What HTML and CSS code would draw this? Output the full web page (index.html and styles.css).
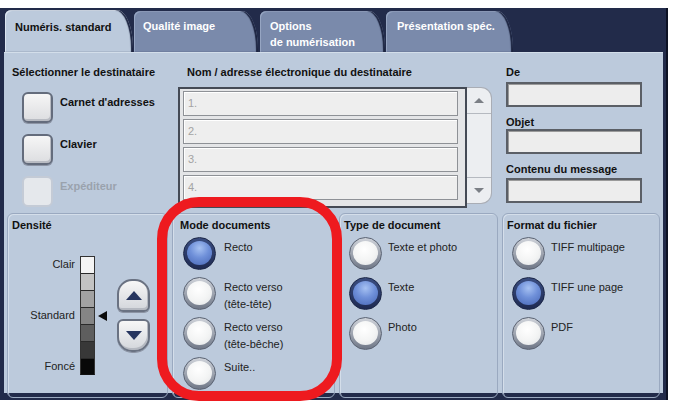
FILE: index.html
```html
<!DOCTYPE html>
<html lang="fr">
<head>
<meta charset="utf-8">
<title>Numéris. standard</title>
<link rel="stylesheet" href="styles.css">
</head>
<body>
<div class="screen">
  <div class="tabs">
    <div class="tab active">Numéris. standard</div>
    <div class="tab t2">Qualité image</div>
    <div class="tab t3">Options<br>de numérisation</div>
    <div class="tab t4">Présentation spéc.</div>
  </div>
  <div class="panel">
    <div class="top">
      <div class="col-left">
        <div class="label">Sélectionner le destinataire</div>
        <div class="btn-list">
          <div class="btn-row"><span class="sq-btn"></span><span class="btn-text">Carnet d'adresses</span></div>
          <div class="btn-row"><span class="sq-btn"></span><span class="btn-text">Clavier</span></div>
          <div class="btn-row disabled"><span class="sq-btn"></span><span class="btn-text">Expéditeur</span></div>
        </div>
      </div>
      <div class="col-mid">
        <div class="label mid-label">Nom / adresse électronique du destinataire</div>
        <div class="listwrap">
          <div class="listbox">
            <div class="lrow">1.</div>
            <div class="lrow">2.</div>
            <div class="lrow">3.</div>
            <div class="lrow">4.</div>
          </div>
          <div class="scroll">
            <div class="sc-up"><span class="tri-up"></span></div>
            <div class="sc-mid"></div>
            <div class="sc-down"><span class="tri-down"></span></div>
          </div>
        </div>
      </div>
      <div class="col-right">
        <div class="label r1">De</div>
        <div class="field"></div>
        <div class="label r2">Objet</div>
        <div class="field"></div>
        <div class="label r3">Contenu du message</div>
        <div class="field"></div>
      </div>
    </div>
    <div class="bottom">
      <div class="group density">
        <div class="gtitle">Densité</div>
        <div class="dens-body">
          <div class="scale-grid">
            <span class="dlabel l1">Clair</span>
            <span class="dlabel l4">Standard</span>
            <span class="dlabel l7">Foncé</span>
            <span class="seg s1"></span>
            <span class="seg s2"></span>
            <span class="seg s3"></span>
            <span class="seg s4"></span>
            <span class="seg s5"></span>
            <span class="seg s6"></span>
            <span class="seg s7"></span>
            <span class="pointer"></span>
          </div>
          <div class="updown">
            <div class="ud up"><span class="big-up"></span></div>
            <div class="ud down"><span class="big-down"></span></div>
          </div>
        </div>
      </div>
      <div class="group mode">
        <div class="gtitle">Mode documents</div>
        <div class="opts">
          <div class="opt"><span class="radio on"></span><span class="otext">Recto</span></div>
          <div class="opt"><span class="radio"></span><span class="otext">Recto verso<br>(tête-tête)</span></div>
          <div class="opt"><span class="radio"></span><span class="otext">Recto verso<br>(tête-bêche)</span></div>
          <div class="opt"><span class="radio"></span><span class="otext">Suite..</span></div>
        </div>
      </div>
      <div class="group type">
        <div class="gtitle">Type de document</div>
        <div class="opts">
          <div class="opt"><span class="radio"></span><span class="otext">Texte et photo</span></div>
          <div class="opt"><span class="radio on"></span><span class="otext">Texte</span></div>
          <div class="opt"><span class="radio"></span><span class="otext">Photo</span></div>
        </div>
      </div>
      <div class="group format">
        <div class="gtitle">Format du fichier</div>
        <div class="opts">
          <div class="opt"><span class="radio"></span><span class="otext">TIFF multipage</span></div>
          <div class="opt"><span class="radio on"></span><span class="otext">TIFF une page</span></div>
          <div class="opt"><span class="radio"></span><span class="otext">PDF</span></div>
        </div>
      </div>
    </div>
  </div>
</div>
<div class="highlight"></div>
</body>
</html>
```
FILE: styles.css
```css
html, body {
  margin: 0;
  padding: 0;
}
body {
  width: 673px;
  height: 404px;
  overflow: hidden;
  background: #ffffff;
  position: relative;
  font-family: "Liberation Sans", Arial, sans-serif;
  font-size: 11px;
  color: #1a1a1a;
}
.screen {
  margin-top: 8px;
  width: 668px;
  height: 392px;
  box-sizing: border-box;
  background: #222b4a;
  padding: 2px 3px 7px 4px;
  display: flex;
  flex-direction: column;
  border-right: 2px solid #0d1224;
}
.tabs {
  height: 42px;
  display: flex;
  align-items: flex-end;
  flex: none;
}
.tab {
  height: 41px;
  box-sizing: border-box;
  padding: 7px 0 0 10px;
  font-weight: bold;
  line-height: 16px;
  color: #ffffff;
  background: #7a8aab;
  border-radius: 6px 16px 0 0 / 6px 38px 0 0;
  box-shadow: inset -2px 0 1px #1c2440, inset 1px 1px 0 #96a5c2;
}
.tab.active {
  height: 42px;
  width: 128px;
  margin-left: 1px;
  color: #111111;
  background: #bccadc;
  padding-top: 9px;
  box-shadow: inset -2px 0 1px #1c2440, inset 1px 1px 0 #dbe4ef;
}
.t2 { width: 124px; margin-left: 1px; padding-left: 9px; }
.t3 { width: 125px; margin-left: 2px; padding-left: 10px; }
.t4 { width: 127px; margin-left: 1px; padding-left: 11px; }

.panel {
  flex: 1;
  background: #bccadc;
  display: flex;
  flex-direction: column;
  box-shadow: inset 0 1px 0 #d3deea;
}
.top {
  display: grid;
  grid-template-columns: 166px 314px 150px;
  column-gap: 0;
  padding: 14px 9px 0 8px;
}
.col-right { margin-left: 14px; display: flex; flex-direction: column; }
.label {
  font-weight: bold;
  line-height: 13px;
  color: #111111;
  white-space: nowrap;
}
.btn-list {
  margin-top: 13px;
  margin-left: 10px;
  display: flex;
  flex-direction: column;
  gap: 11px;
}
.btn-row {
  display: flex;
  align-items: flex-start;
  gap: 7px;
  height: 31px;
}
.sq-btn {
  width: 31px;
  height: 31px;
  box-sizing: border-box;
  border: 2px solid #646c7c;
  border-radius: 6px;
  background: linear-gradient(#f6f6f6, #dcdde0);
  box-shadow: inset -1px -2px 0 #b9bcc3, 0 1px 0 #8d95a5;
}
.btn-text {
  font-weight: bold;
  line-height: 13px;
  padding-top: 4px;
  color: #111111;
}
.disabled .sq-btn {
  border-color: #c4cbd6;
  background: #e5e8ec;
  box-shadow: none;
}
.disabled .btn-text { color: #9aa2ad; }

.mid-label { padding-left: 9px; margin-bottom: 8px; }
.listwrap {
  display: flex;
  height: 121px;
}
.listbox {
  width: 289px;
  box-sizing: border-box;
  border: 2px solid #444a55;
  background: #e4e5e7;
  padding: 2px 7px 0 3px;
  display: flex;
  flex-direction: column;
  gap: 3px;
}
.lrow {
  height: 25px;
  box-sizing: border-box;
  border: 1px solid #8e9196;
  background: #eeeeee;
  box-shadow: inset 1px 1px 0 #ffffff;
  color: #a3a3a3;
  line-height: 23px;
  padding-left: 4px;
}
.scroll {
  width: 25px;
  height: 117px;
  box-sizing: border-box;
  border: 1px solid #a9adb5;
  border-left: none;
  border-radius: 0 11px 11px 0;
  background: #eceef1;
  display: flex;
  flex-direction: column;
}
.sc-up, .sc-down {
  height: 25px;
  display: flex;
  align-items: center;
  justify-content: center;
}
.sc-up { border-bottom: 1px solid #b5b9c0; }
.sc-down { border-top: 1px solid #b5b9c0; margin-top: auto; }
.tri-up {
  width: 0; height: 0;
  border-left: 5px solid transparent;
  border-right: 5px solid transparent;
  border-bottom: 5px solid #7b7f86;
}
.tri-down {
  width: 0; height: 0;
  border-left: 5px solid transparent;
  border-right: 5px solid transparent;
  border-top: 5px solid #7b7f86;
}
.field {
  height: 25px;
  box-sizing: border-box;
  border: 2px solid #5b5f66;
  background: #ededed;
  box-shadow: inset 1px 1px 0 #9a9a9a;
}
.r1 { margin-bottom: 3px; }
.r2 { margin-top: 9px; }
.r3 { margin-top: 9px; margin-bottom: 2px; }

.bottom {
  display: grid;
  grid-template-columns: 161px 163px 159px 158px;
  column-gap: 4px;
  padding: 0 0 0 3px;
  margin-top: 5px;
  height: 178px;
}
.group {
  box-sizing: border-box;
  border: 1px solid #9aa9c0;
  border-radius: 6px;
  box-shadow: inset 1px 1px 0 #d4deea;
  padding: 5px 0 0 4px;
}
.gtitle {
  font-weight: bold;
  line-height: 13px;
  color: #111111;
  white-space: nowrap;
}
.mode { padding-left: 7px; }
.dens-body {
  display: flex;
  align-items: center;
  margin-top: 24px;
}
.scale-grid {
  display: grid;
  grid-template-columns: 68px 15px 14px;
  grid-template-rows: repeat(7, 17px);
  column-gap: 0;
}
.dlabel {
  grid-column: 1;
  text-align: right;
  padding-right: 5px;
  align-self: center;
  color: #222222;
  line-height: 13px;
  margin-left: -4px;
}
.l1 { grid-row: 1; }
.l4 { grid-row: 4; }
.l7 { grid-row: 7; }
.seg {
  grid-column: 2;
  border-left: 1px solid #333;
  border-right: 1px solid #333;
}
.s1 { grid-row: 1; background: #f4f4f4; border-top: 1px solid #333; }
.s2 { grid-row: 2; background: #c3c3c3; }
.s3 { grid-row: 3; background: #a2a2a2; }
.s4 { grid-row: 4; background: #858585; }
.s5 { grid-row: 5; background: #5e5e5e; }
.s6 { grid-row: 6; background: #383838; }
.s7 { grid-row: 7; background: #080808; border-bottom: 1px solid #111; }
.seg + .seg { box-shadow: inset 0 1px 0 #2a2a2a; }
.pointer {
  grid-column: 3;
  grid-row: 4;
  align-self: center;
  justify-self: start;
  margin-left: 3px;
  width: 0; height: 0;
  border-top: 5px solid transparent;
  border-bottom: 5px solid transparent;
  border-right: 9px solid #0b0b0b;
}
.updown {
  margin-left: 8px;
  display: flex;
  flex-direction: column;
  gap: 7px;
}
.ud {
  width: 33px;
  height: 33px;
  box-sizing: border-box;
  border: 2px solid #6a7282;
  background: linear-gradient(#f7f7f7, #d3d6db);
  box-shadow: inset -1px -2px 0 #b5b9c1, 0 1px 0 #8c94a4;
  display: flex;
  align-items: center;
  justify-content: center;
}
.up { border-radius: 15px 15px 6px 6px; }
.down { border-radius: 6px 6px 15px 15px; }
.big-up {
  width: 0; height: 0;
  border-left: 8px solid transparent;
  border-right: 8px solid transparent;
  border-bottom: 9px solid #26355f;
}
.big-down {
  width: 0; height: 0;
  border-left: 8px solid transparent;
  border-right: 8px solid transparent;
  border-top: 9px solid #26355f;
}
.opts {
  margin-top: 5px;
  padding-left: 5px;
  display: flex;
  flex-direction: column;
}
.mode .opts { padding-left: 3px; }
.opt {
  height: 40px;
  display: flex;
  align-items: flex-start;
  gap: 6px;
}
.mode .opt { gap: 8px; }
.radio {
  flex: none;
  width: 33px;
  height: 33px;
  box-sizing: border-box;
  border-radius: 50%;
  border: 1px solid #5a6272;
  background: linear-gradient(#cfd3da, #6f7787);
  position: relative;
}
.radio::after {
  content: "";
  position: absolute;
  left: 3px; top: 3px; right: 3px; bottom: 4px;
  border-radius: 50%;
  background: radial-gradient(circle at 45% 35%, #ffffff 0, #f3f4f4 55%, #dfe2e5 100%);
}
.radio.on {
  border-color: #1b2646;
  background: linear-gradient(#3a4d80, #1e2a52);
}
.radio.on::after {
  background: radial-gradient(circle at 50% 30%, #a6c1f2 0, #6f90d9 45%, #4766b5 100%);
}
.otext {
  padding-top: 2px;
  line-height: 17px;
  color: #222222;
  white-space: nowrap;
}
.highlight {
  position: absolute;
  left: 157px;
  top: 197px;
  width: 185px;
  height: 204px;
  box-sizing: border-box;
  border: 10px solid #ee1a1f;
  border-radius: 42px;
}
```
